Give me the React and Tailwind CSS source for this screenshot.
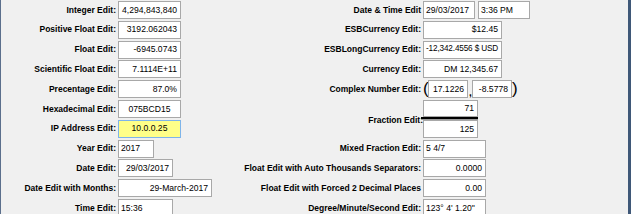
import React from 'react';

const font = { fontFamily: '"Liberation Sans", Arial, sans-serif' };

const Box = ({ w, align = 'right', children, hi, tight }) => {
  const alignCls = align === 'left' ? 'justify-start pl-[2px]' : align === 'center' ? 'justify-center' : 'justify-end pr-[3px]';
  return (
    <div
      className={`h-[18px] flex items-center border text-black whitespace-nowrap overflow-hidden ${tight ? 'text-[8.2px] tracking-[-0.15px] pr-[2px]' : 'text-[8.6px]'} ${alignCls} ${hi ? 'bg-[#ffff88] border-[#7eb4ea]' : 'bg-white border-[#a8a8a8]'}`}
      style={{ width: w }}
    >
      {children}
    </div>
  );
};

const Label = ({ children }) => (
  <div className="h-[18px] flex items-center justify-end pr-[2px] text-[8.5px] font-bold text-black whitespace-nowrap">
    {children}
  </div>
);

const leftRows = [
  ['Integer Edit:', '4,294,843,840', 63, 'right'],
  ['Positive Float Edit:', '3192.062043', 63, 'right'],
  ['Float Edit:', '-6945.0743', 63, 'right'],
  ['Scientific Float Edit:', '7.1114E+11', 63, 'right'],
  ['Precentage Edit:', '87.0%', 63, 'right'],
  ['Hexadecimal Edit:', '075BCD15', 63, 'center'],
  ['IP Address Edit:', '10.0.0.25', 63, 'center', true],
  ['Year Edit:', '2017', 36, 'left'],
  ['Date Edit:', '29/03/2017', 55, 'right'],
  ['Date Edit with Months:', '29-March-2017', 94, 'right'],
  ['Time Edit:', '15:36', 55, 'left'],
];

export default function App() {
  return (
    <div
      className="w-[631px] h-[214px] overflow-hidden bg-[#f0f0f0] border-l border-l-[#5b6f8c] border-r-[3px] border-r-[#3f5878] pt-[1px]"
      style={font}
    >
      <div className="grid grid-cols-[117px_101px_204px_1fr] auto-rows-[19.8px]">
        {leftRows.map((r, i) => (
          <React.Fragment key={r[0]}>
            <div style={{ gridRow: i + 1, gridColumn: 1 }}>
              <Label>{r[0]}</Label>
            </div>
            <div style={{ gridRow: i + 1, gridColumn: 2 }}>
              <Box w={r[2]} align={r[3]} hi={r[4]}>{r[1]}</Box>
            </div>
          </React.Fragment>
        ))}

        {/* right column */}
        <div className="row-start-1 col-start-3"><Label>Date &amp; Time Edit</Label></div>
        <div className="row-start-1 col-start-4 flex gap-[3px]">
          <Box w={52} align="left">29/03/2017</Box>
          <Box w={52} align="left">3:36 PM</Box>
        </div>

        <div className="row-start-2 col-start-3"><Label>ESBCurrency Edit:</Label></div>
        <div className="row-start-2 col-start-4"><Box w={79}>$12.45</Box></div>

        <div className="row-start-3 col-start-3"><Label>ESBLongCurrency Edit:</Label></div>
        <div className="row-start-3 col-start-4"><Box w={79} tight>-12,342.4556 $ USD</Box></div>

        <div className="row-start-4 col-start-3"><Label>Currency Edit:</Label></div>
        <div className="row-start-4 col-start-4"><Box w={79}>DM 12,345.67</Box></div>

        <div className="row-start-5 col-start-3"><Label>Complex Number Edit:</Label></div>
        <div className="row-start-5 col-start-4 flex items-start h-[18px]">
          <span className="w-[5px] h-[18px] flex items-center text-[17px] leading-none text-black -mt-[1px]">(</span>
          <Box w={40}>17.1226</Box>
          <span className="w-[4px] h-[18px] flex items-end text-[10px] leading-none font-bold text-black pl-[1px]">,</span>
          <Box w={40}>-8.5778</Box>
          <span className="w-[5px] h-[18px] flex items-center text-[17px] leading-none text-black -mt-[1px]">)</span>
        </div>

        <div className="row-start-6 row-span-2 col-start-3 flex items-center justify-end">
          <div className="text-[8.5px] font-bold text-black whitespace-nowrap pt-[1px]">Fraction Edit:</div>
        </div>
        <div className="row-start-6 row-span-2 col-start-4 flex flex-col">
          <div className="h-[17px] w-[55px] bg-white border border-[#a8a8a8] flex items-center justify-end pr-[3px] text-[8.6px] text-black">71</div>
          <div className="h-[3px] w-[57px] -ml-[2px] border-t-2 border-black border-b border-b-[#9a9a9a]"></div>
          <Box w={55}>125</Box>
        </div>

        <div className="row-start-8 col-start-3"><Label>Mixed Fraction Edit:</Label></div>
        <div className="row-start-8 col-start-4"><Box w={63} align="left">5 4/7</Box></div>

        <div className="row-start-9 col-start-3"><Label>Float Edit with Auto Thousands Separators:</Label></div>
        <div className="row-start-9 col-start-4"><Box w={63}>0.0000</Box></div>

        <div className="row-start-10 col-start-3"><Label>Float Edit with Forced 2 Decimal Places</Label></div>
        <div className="row-start-10 col-start-4"><Box w={63}>0.00</Box></div>

        <div className="row-start-11 col-start-3"><Label>Degree/Minute/Second Edit:</Label></div>
        <div className="row-start-11 col-start-4"><Box w={63} align="left">123° 4' 1.20"</Box></div>
      </div>
    </div>
  );
}
